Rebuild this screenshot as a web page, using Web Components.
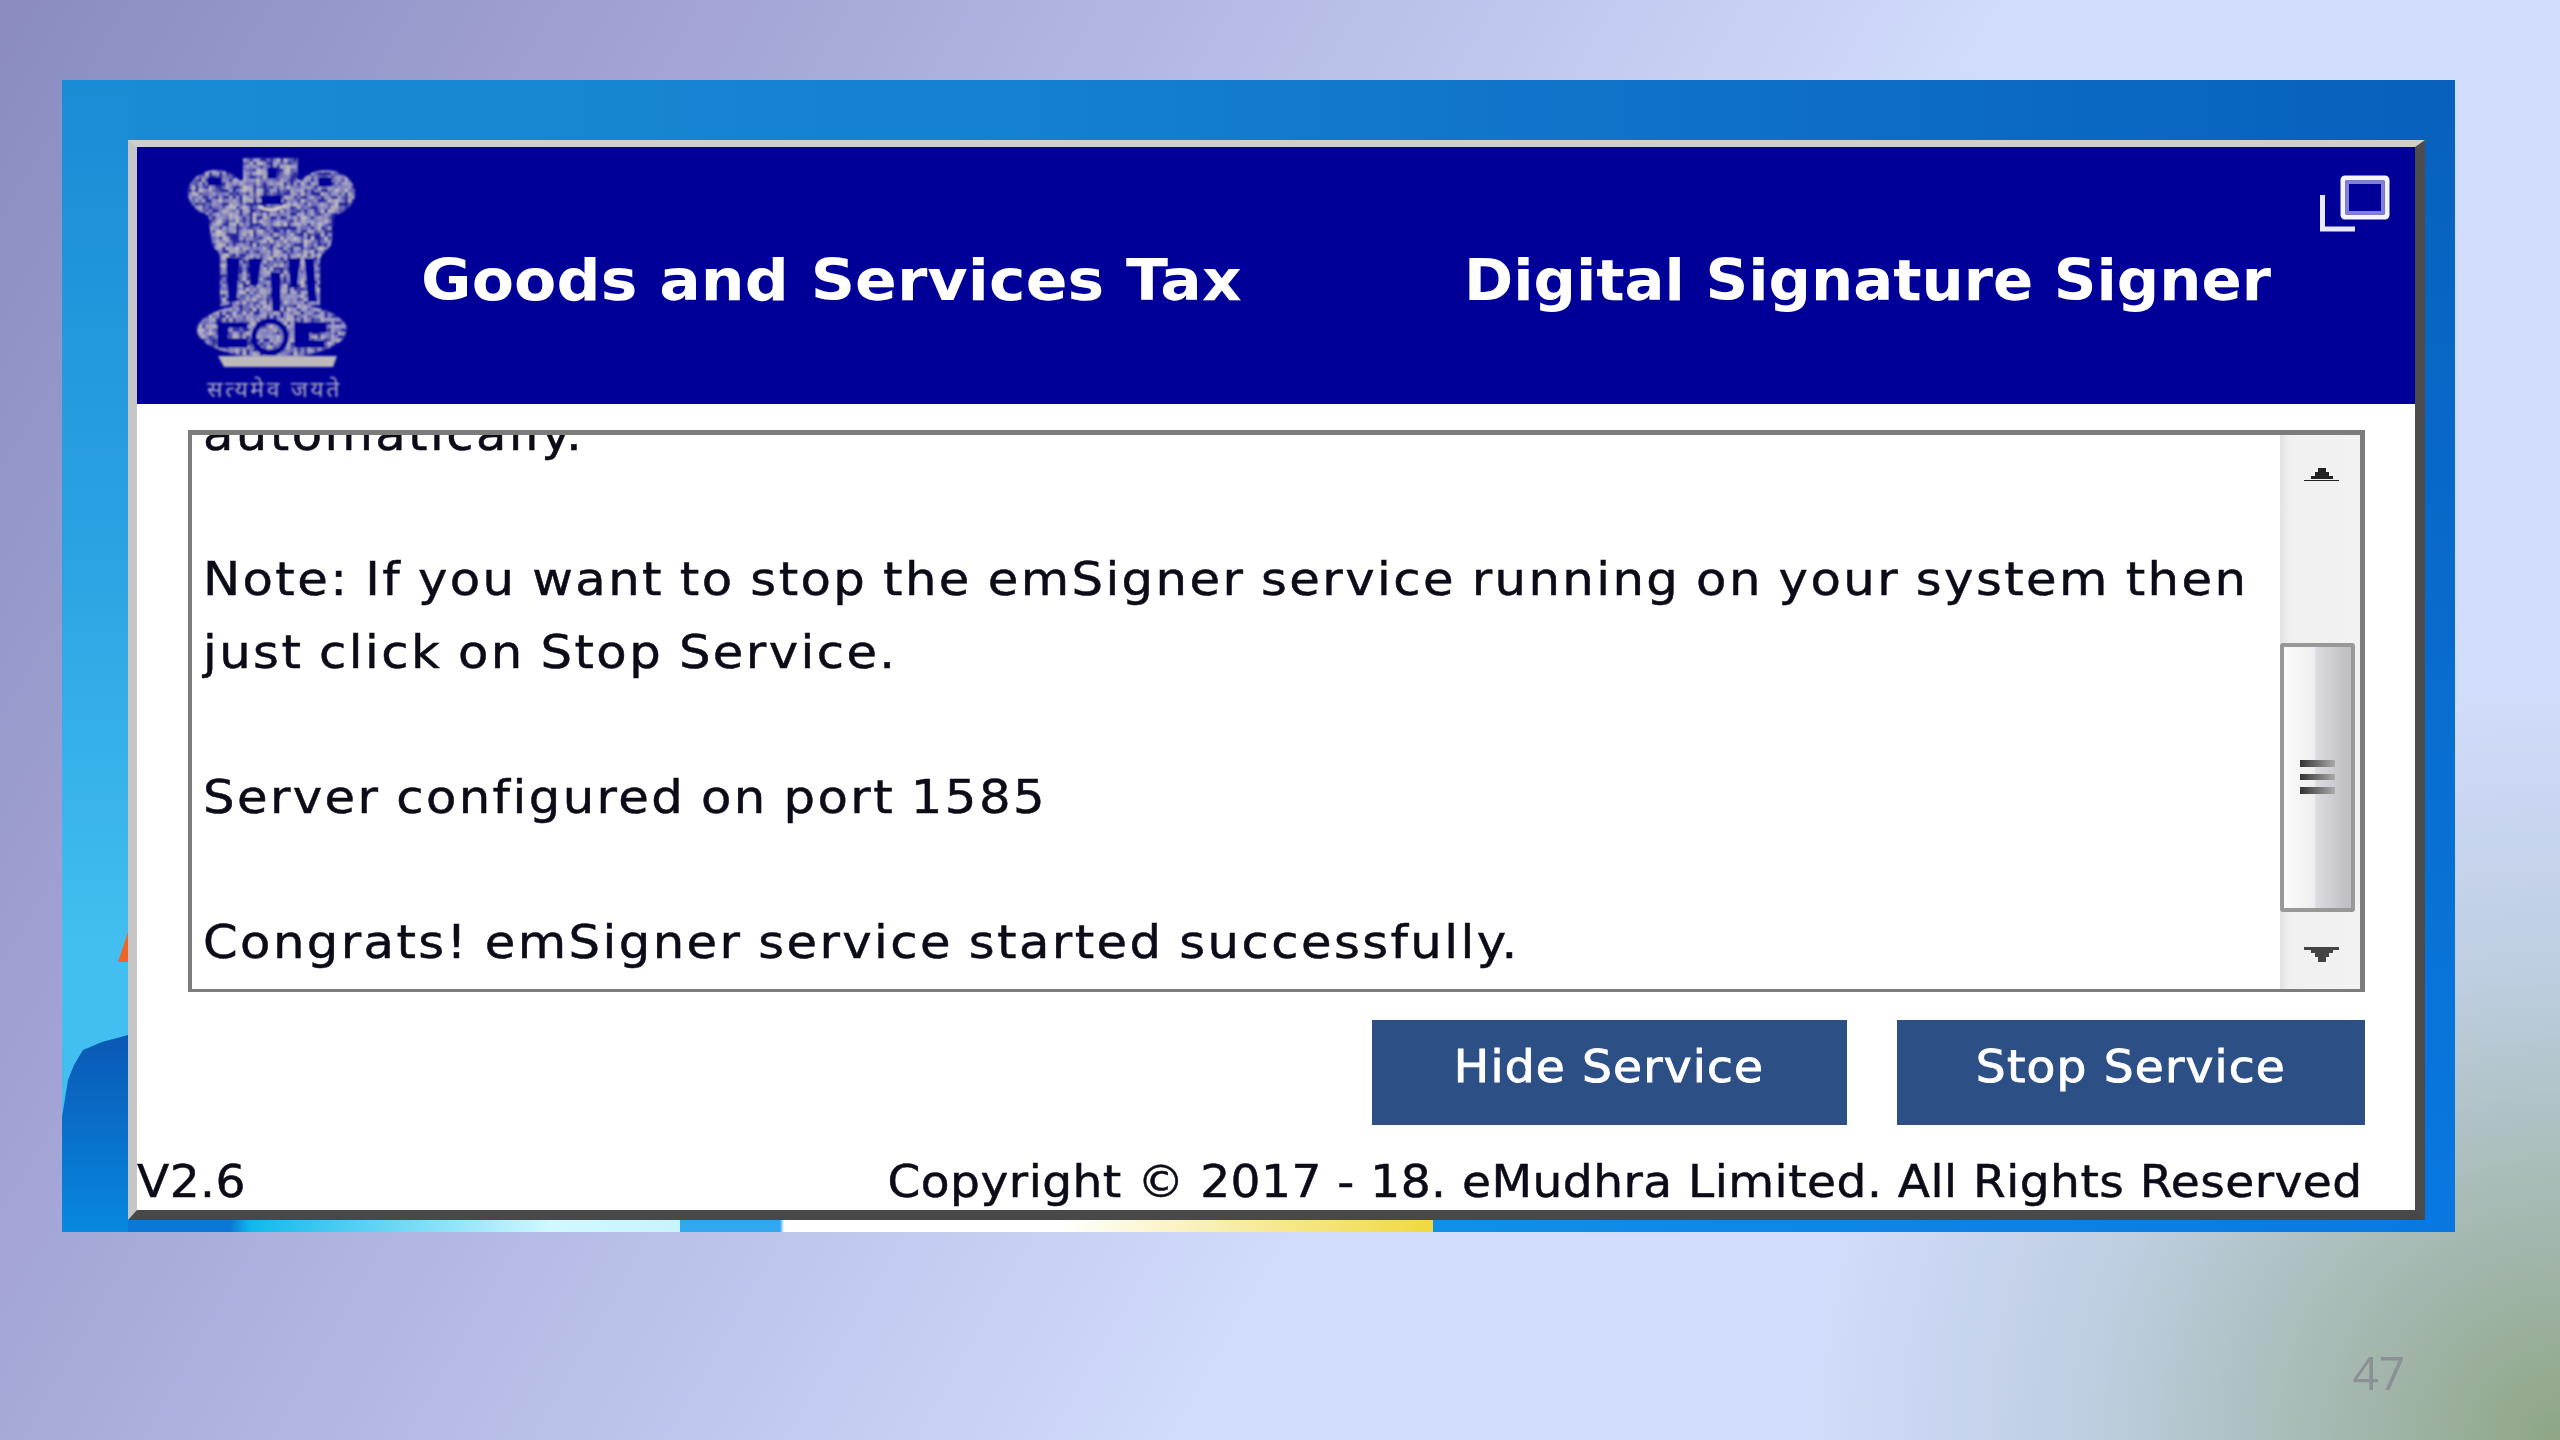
<!DOCTYPE html>
<html>
<head>
<meta charset="utf-8">
<title>emSigner</title>
<style>
    html, body { margin: 0; padding: 0; }
</style>
</head>
<body>
<gst-slide>
    <desktop-frame>
        <signer-window>
            <window-header slot="header"></window-header>
            <log-pane>automatically.<br><br>Note: If you want to stop the emSigner service running on your system then<br>just click on Stop Service.<br><br>Server configured on port 1585<br><br>Congrats! emSigner service started successfully.</log-pane>
            <action-button slot="actions" style="--w:475px">Hide Service</action-button>
            <action-button slot="actions" style="--w:468px">Stop Service</action-button>
            <span slot="version">V2.6</span>
            <span slot="copyright">Copyright © 2017 - 18. eMudhra Limited. All Rights Reserved</span>
        </signer-window>
    </desktop-frame>
    <span slot="number">47</span>
</gst-slide>

<script>
class GstSlide extends HTMLElement {
    constructor() {
        super();
        this.attachShadow({ mode: 'open' });
        this.shadowRoot.innerHTML = `
            <style>
                :host {
                    display: flex;
                    flex-direction: column;
                    box-sizing: border-box;
                    width: 2560px;
                    height: 1440px;
                    padding: 80px 105px 0 62px;
                    overflow: hidden;
                    background:
                        radial-gradient(circle 760px at 100% 100%, #8fa585, rgba(186, 202, 218, .8) 62%, rgba(210, 220, 252, 0)),
                        linear-gradient(120deg, #8a8cc0 0%, #a3a6d6 22%, #d2dcfc 60%, #d2dcfc 100%);
                }
                .number {
                    display: flex;
                    justify-content: flex-end;
                    padding: 110px 0 0;
                    margin-right: 50px;
                    font: 46px/60px "Open Sans", sans-serif;
                    color: #8c9094;
                    filter: blur(.6px);
                }
            </style>
            <slot></slot>
            <div class="number"><slot name="number"></slot></div>
        `;
    }
}

class DesktopFrame extends HTMLElement {
    constructor() {
        super();
        this.attachShadow({ mode: 'open' });
        this.shadowRoot.innerHTML = `
            <style>
                :host {
                    display: block;
                    position: relative;
                    box-sizing: border-box;
                    width: 2393px;
                    height: 1152px;
                    padding: 60px 30px 12px 66px;
                    background:
                        linear-gradient(to right, #0a78d4 0, #0a78d4 168px, #10b8ec 188px, #d0f8ff 488px, #c8f4ff 618px, #30a8f0 618px, #30a8f0 718px, #fff 722px, #fff 998px, #f0d840 1371px, #1090e8 1371px, #0878e0 100%) left bottom / 100% 12px no-repeat,
                        linear-gradient(to bottom, #1a8bd6, #2aa2e2 40%, #42bef0 75%) left top / 66px 100% no-repeat,
                        linear-gradient(to bottom, #0860bc, #0878e0) right top / 30px 100% no-repeat,
                        linear-gradient(to right, #1a8cd6, #1480d0 40%, #0860bc);
                }
                svg { position: absolute; left: 0; top: 0; }
            </style>
            <svg width="66" height="1152" viewBox="0 0 66 1152">
                <defs>
                    <linearGradient id="hill" x1="0" y1="0" x2="0" y2="1">
                        <stop offset="0" stop-color="#0a58b4"/>
                        <stop offset="1" stop-color="#0888e0"/>
                    </linearGradient>
                </defs>
                <path d="M0 1037 L6 1000 L12 985 L21 970 L40 962 L66 955 V1152 H0 Z" fill="url(#hill)"/>
                <path d="M56 882 L66 852 V882 Z" fill="#f06428"/>
            </svg>
            <slot></slot>
        `;
    }
}

class SignerWindow extends HTMLElement {
    constructor() {
        super();
        this.attachShadow({ mode: 'open' });
        this.shadowRoot.innerHTML = `
            <style>
                :host {
                    display: flex;
                    flex-direction: column;
                    position: relative;
                    box-sizing: border-box;
                    width: 2297px;
                    height: 1080px;
                    border-style: solid;
                    border-width: 7px 10px 10px 9px;
                    border-color: #cfcfcb #4c4c4c #484848 #c6c6c6;
                    background: #fff;
                    font-family: "DejaVu Sans", sans-serif;
                    color: #0c0c18;
                }
                .body {
                    flex: 1;
                    display: flex;
                    flex-direction: column;
                    padding: 26px 50px 0 51px;
                }
                .actions {
                    display: flex;
                    justify-content: flex-end;
                    gap: 50px;
                    margin-top: 28px;
                }
                .footer {
                    display: flex;
                    justify-content: space-between;
                    align-items: flex-end;
                    flex: 1;
                    padding: 0 52px 6px 0;
                    font-size: 44px;
                    line-height: 44px;
                    letter-spacing: .44px;
                    -webkit-text-stroke: .5px #0c0c18;
                    white-space: nowrap;
                    filter: blur(.6px);
                }
                .version { transform: scaleX(1.07); transform-origin: left; }
                .copyright { transform: scaleX(1.07); transform-origin: right; }
            </style>
            <slot name="header"></slot>
            <div class="body">
                <slot></slot>
                <div class="actions"><slot name="actions"></slot></div>
            </div>
            <div class="footer">
                <div class="version"><slot name="version"></slot></div>
                <div class="copyright"><slot name="copyright"></slot></div>
            </div>
        `;
    }
}

class WindowHeader extends HTMLElement {
    constructor() {
        super();
        this.attachShadow({ mode: 'open' });
        this.shadowRoot.innerHTML = `
            <style>
                :host {
                    display: flex;
                    align-items: center;
                    height: 257px;
                    padding-left: 33px;
                    background: #000099;
                    color: #fff;
                    font: bold 57px/57px "DejaVu Sans", sans-serif;
                }
                .title {
                    padding-top: 10px;
                    white-space: nowrap;
                    transform-origin: left;
                    filter: blur(.6px);
                }
                .goods { margin-left: 31px; letter-spacing: .14px; transform: scaleX(1.08); }
                .signer { margin-left: 283px; transform: scaleX(1.04); }
                restore-icon {
                    align-self: flex-start;
                    margin: 28px 25px 0 auto;
                }
            </style>
            <gst-emblem></gst-emblem>
            <span class="title goods">Goods and Services Tax</span>
            <span class="title signer">Digital Signature Signer</span>
            <restore-icon></restore-icon>
        `;
    }
}

class GstEmblem extends HTMLElement {
    constructor() {
        super();
        this.attachShadow({ mode: 'open' });
        // speckled mosaic clipped to the silhouette, the source logo is a tiny upscaled bitmap
        const colors = ['#8a88c0', '#a8a6c8', '#5c5cb0', '#c8c4c0', '#3030a0', '#9896c4', '#7472b8', '#2020a0', '#b4b0c4'];
        let seed = 7;
        let cells = '';
        for (let y = 15; y < 232; y += 3.4) {
            for (let x = 15; x < 190; x += 3.4) {
                seed = (seed * 1103 + 12345) % 65536;
                const c = colors[(seed >> 5) % colors.length];
                cells += `<rect x="${x}" y="${y}" width="3.5" height="3.5" fill="${c}"/>`;
            }
        }
        this.shadowRoot.innerHTML = `
            <style>
                :host { display: block; width: 220px; height: 257px; position: relative; }
                svg { display: block; }
                .motto {
                    position: absolute;
                    left: 37px;
                    top: 228px;
                    font: 23px/26px "Noto Sans", "DejaVu Sans", sans-serif;
                    letter-spacing: 2.6px;
                    color: #aeaac4;
                    white-space: nowrap;
                    filter: blur(.8px);
                }
            </style>
            <svg width="220" height="257" viewBox="0 7 220 257">
                <defs>
                    <clipPath id="shape">
                        <rect x="73" y="18" width="55" height="40"/>
                        <ellipse cx="46" cy="53" rx="28" ry="23"/>
                        <ellipse cx="156" cy="53" rx="29" ry="23"/>
                        <rect x="60" y="40" width="82" height="42"/>
                        <path d="M38 72 H165 L161 105 L150 118 H52 L42 105 Z"/>
                        <rect x="50" y="116" width="100" height="50"/>
                        <ellipse cx="102" cy="190" rx="75" ry="28"/>
                    </clipPath>
                    <filter id="soft"><feGaussianBlur stdDeviation="1.1"/></filter>
                </defs>
                <g filter="url(#soft)">
                    <g clip-path="url(#shape)">${cells}</g>
                    <g fill="#000099">
                        <rect x="37" y="37" width="15" height="9"/>
                        <rect x="148" y="37" width="14" height="10"/>
                        <rect x="97" y="27" width="10" height="12"/>
                        <rect x="91" y="55" width="21" height="10"/>
                        <path d="M56 118 H70 L67 162 H58 Z"/>
                        <path d="M78 118 H92 L88 146 H80 Z"/>
                        <path d="M100 132 H111 V172 H102 Z"/>
                        <path d="M118 118 H131 L127 148 H120 Z"/>
                        <path d="M134 118 H144 L147 162 H138 Z"/>
                        <path d="M47 182 H78 V188 H58 V198 H78 V208 H47 Z"/>
                        <path d="M124 182 H157 V193 H140 V200 H155 V208 H124 Z"/>
                    </g>
                    <circle cx="100" cy="197" r="16" fill="none" stroke="#000099" stroke-width="6"/>
                    <path d="M88 66 Q101 74 116 65" fill="none" stroke="#e0dcc8" stroke-width="2.5"/>
                    <path d="M48 216 H167 L163 227 H54 Z" fill="#bcb8bc"/>
                </g>
            </svg>
            <span class="motto">सत्यमेव जयते</span>
        `;
    }
}

class RestoreIcon extends HTMLElement {
    constructor() {
        super();
        this.attachShadow({ mode: 'open' });
        this.shadowRoot.innerHTML = `
            <style>
                :host { display: block; width: 70px; height: 57px; }
                svg { display: block; filter: blur(.5px); }
            </style>
            <svg width="70" height="57" viewBox="0 0 70 57" fill="none">
                <rect x="23" y="3" width="44" height="39" rx="2" stroke="#f4f4ff" stroke-width="5"/>
                <rect x="27.5" y="7.5" width="35" height="30" stroke="#8080d8" stroke-width="3"/>
                <path d="M2.5 20 V54 H35" stroke="#e8e8ff" stroke-width="5"/>
            </svg>
        `;
    }
}

class LogPane extends HTMLElement {
    constructor() {
        super();
        this.attachShadow({ mode: 'open' });
        this.shadowRoot.innerHTML = `
            <style>
                :host {
                    display: flex;
                    box-sizing: border-box;
                    height: 562px;
                    border-style: solid;
                    border-width: 5px 5px 3px 4px;
                    border-color: #7c7c7c;
                    background: #fff;
                }
                .text {
                    flex: 1;
                    min-width: 0;
                    display: flex;
                    flex-direction: column;
                    justify-content: flex-end;
                    overflow: hidden;
                    padding: 0 0 11px 11px;
                    font-size: 46px;
                    line-height: 72.5px;
                    letter-spacing: 2.23px;
                    word-spacing: -2.2px;
                    -webkit-text-stroke: .5px #0c0c18;
                    white-space: nowrap;
                }
                .text > div { filter: blur(.6px); transform: scaleX(1.08); transform-origin: left; }
            </style>
            <div class="text"><div><slot></slot></div></div>
            <scroll-rail></scroll-rail>
        `;
    }
}

class ScrollRail extends HTMLElement {
    constructor() {
        super();
        this.attachShadow({ mode: 'open' });
        this.shadowRoot.innerHTML = `
            <style>
                :host {
                    display: flex;
                    flex-direction: column;
                    flex: none;
                    width: 80px;
                    background: linear-gradient(to right, #e2e2e2, #f0f0f0 12%, #f2f2f2);
                }
                .end { display: flex; justify-content: center; }
                .up { height: 208px; padding-top: 30px; box-sizing: border-box; padding-left: 4px; }
                .down { height: 77px; padding-top: 35px; box-sizing: border-box; padding-left: 4px; }
                .thumb {
                    flex: 1;
                    display: flex;
                    align-items: center;
                    justify-content: center;
                    width: 75px;
                    box-sizing: border-box;
                    border: 4px solid #989898;
                    border-radius: 3px;
                    background: linear-gradient(to right, #fbfbfb, #efefef 45%, #dcdce0 48%, #c0c0c6 92%);
                }
                svg { display: block; filter: blur(.7px); }
            </style>
            <div class="end up">
                <svg width="36" height="16" viewBox="0 0 36 16"><path d="M0 15 H35 V16 H0 Z M7 14 V11 H11 V7 H14 V3 H22 V7 H25 V11 H29 V14 Z" fill="#222"/></svg>
            </div>
            <div class="thumb">
                <svg width="36" height="38" viewBox="0 0 36 38">
                    <defs>
                        <linearGradient id="g"><stop offset="0" stop-color="#333"/><stop offset="1" stop-color="#aaa"/></linearGradient>
                    </defs>
                    <rect y="1" width="35" height="7" fill="url(#g)"/>
                    <rect y="15" width="35" height="6" fill="url(#g)"/>
                    <rect y="28" width="35" height="7" fill="url(#g)"/>
                </svg>
            </div>
            <div class="end down">
                <svg width="36" height="16" viewBox="0 0 36 16"><path d="M0 0 H35 V3 H0 Z M7 3 H29 V6 H25 V10 H22 V15 H14 V10 H11 V6 H7 Z" fill="#444"/></svg>
            </div>
        `;
    }
}

class ActionButton extends HTMLElement {
    constructor() {
        super();
        this.attachShadow({ mode: 'open' });
        this.shadowRoot.innerHTML = `
            <style>
                :host {
                    display: flex;
                    align-items: center;
                    justify-content: center;
                    box-sizing: border-box;
                    width: var(--w);
                    height: 105px;
                    padding-bottom: 12px;
                    background: #2c4f85;
                    color: #fff;
                    font-size: 44px;
                    line-height: 50px;
                    letter-spacing: 1.1px;
                    -webkit-text-stroke: .9px #fff;
                    white-space: nowrap;
                }
                span { display: block; filter: blur(.5px); transform: scaleX(1.07); }
            </style>
            <span><slot></slot></span>
        `;
    }
}

customElements.define('gst-slide', GstSlide);
customElements.define('desktop-frame', DesktopFrame);
customElements.define('signer-window', SignerWindow);
customElements.define('window-header', WindowHeader);
customElements.define('gst-emblem', GstEmblem);
customElements.define('restore-icon', RestoreIcon);
customElements.define('log-pane', LogPane);
customElements.define('scroll-rail', ScrollRail);
customElements.define('action-button', ActionButton);
</script>
</body>
</html>
